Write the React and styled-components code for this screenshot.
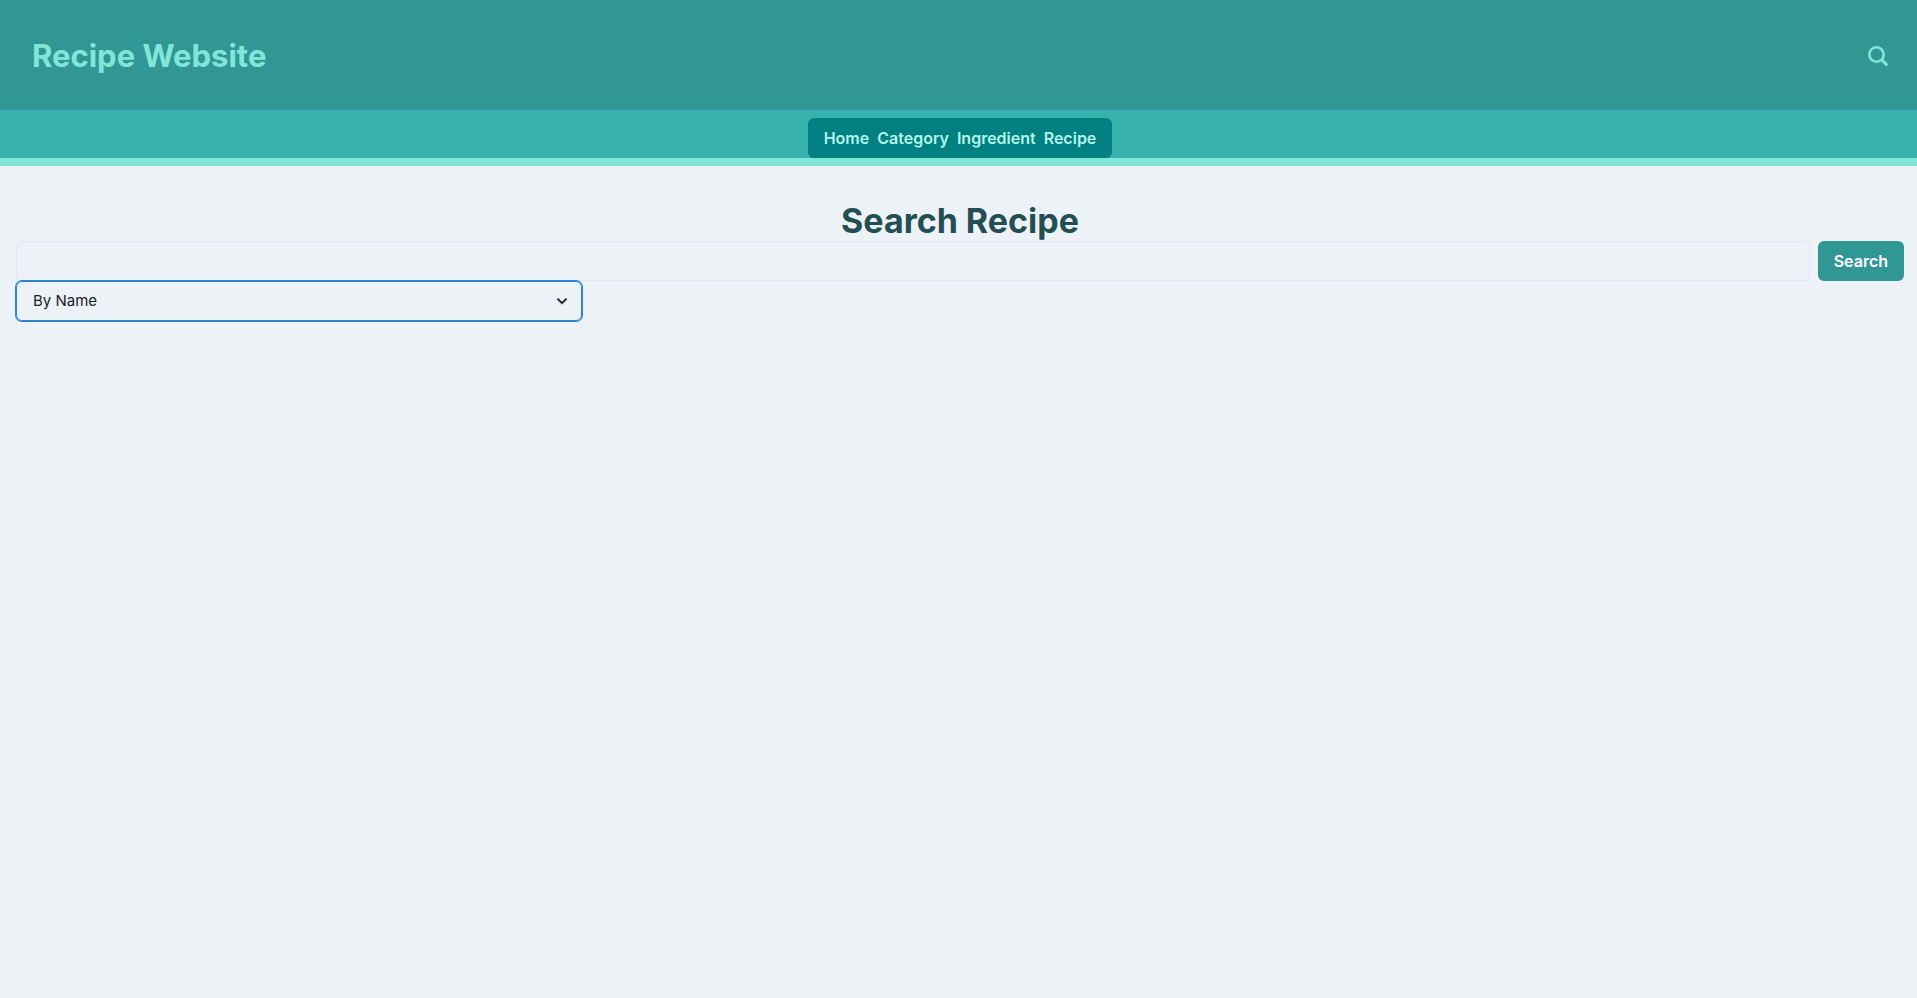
import React from "react";
import styled, { createGlobalStyle } from "styled-components";

const GlobalStyle = createGlobalStyle`
  *, *::before, *::after { box-sizing: border-box; }
  body {
    margin: 0;
    min-height: 100vh;
    background: #edf2f7;
    color: #1a202c;
    font: 400 16px/24px Inter, "Liberation Sans", sans-serif;
  }
  h1, h2 { margin: 0; }
`;

const Header = styled.header`
  display: flex;
  align-items: center;
  justify-content: space-between;
  height: 110px;
  padding: 2px 29px 0 32px;
  background: #319795;
  color: #81e6d9;
`;

const Brand = styled.h1`
  font-size: 31px;
  line-height: 40px;
  font-weight: 700;
`;

const IconButton = styled.button`
  display: flex;
  padding: 0;
  border: 0;
  background: none;
  color: inherit;
  cursor: pointer;
`;

const NavBar = styled.nav`
  display: flex;
  justify-content: center;
  padding: 8px 0 0 3px;
  background: #38b2ac;
  border-bottom: 8px solid #81e6d9;
`;

const NavGroup = styled.div`
  display: flex;
  align-items: center;
  gap: 8px;
  height: 40px;
  padding: 0 16px;
  border-radius: 6px;
  background: #008080;
`;

const NavLink = styled.a`
  color: #b2f5ea;
  font-weight: 600;
  text-decoration: none;
`;

const Main = styled.main`
  padding: 34px 13px 16px 16px;
`;

const Title = styled.h2`
  color: #234e52;
  font-size: 34px;
  line-height: 41px;
  font-weight: 700;
  text-align: center;
`;

const SearchRow = styled.div`
  display: flex;
  gap: 8px;
`;

const SearchInput = styled.input`
  flex: 1;
  min-width: 0;
  height: 40px;
  padding: 0 16px;
  border: 1px solid #e2e8f0;
  border-radius: 6px;
  background: transparent;
  color: inherit;
  font: inherit;
  outline: none;
`;

const SearchButton = styled.button`
  height: 40px;
  padding: 0 16px;
  border: 0;
  border-radius: 6px;
  background: #319795;
  color: #fff;
  font: inherit;
  font-weight: 600;
  cursor: pointer;
`;

const SelectField = styled.div`
  display: grid;
  align-items: center;
  width: 30%;
`;

const Select = styled.select`
  grid-area: 1 / 1;
  width: 100%;
  height: 40px;
  padding: 0 32px 0 16px;
  appearance: none;
  border: 1px solid #3182ce;
  border-radius: 6px;
  box-shadow: 0 0 0 1px #3182ce;
  background: transparent;
  color: inherit;
  font: inherit;
  font-size: 15px;
  outline: none;
`;

const Chevron = styled.svg`
  grid-area: 1 / 1;
  justify-self: end;
  width: 20px;
  height: 20px;
  margin-right: 10px;
  pointer-events: none;
`;

const links = ["Home", "Category", "Ingredient", "Recipe"];

export default function App() {
  return (
    <>
      <GlobalStyle />
      <Header>
        <Brand>Recipe Website</Brand>
        <IconButton type="button" aria-label="Open search">
          <svg width="20" height="20" viewBox="0 0 20 20" fill="none" stroke="currentColor" strokeLinecap="round" aria-hidden="true">
            <circle cx="8.5" cy="8.5" r="7.2" strokeWidth="2.6" />
            <path d="M14.2 14.2L18.3 18.3" strokeWidth="3.2" />
          </svg>
        </IconButton>
      </Header>
      <NavBar>
        <NavGroup>
          {links.map((name) => (
            <NavLink key={name} href={`#${name.toLowerCase()}`}>{name}</NavLink>
          ))}
        </NavGroup>
      </NavBar>
      <Main>
        <Title>Search Recipe</Title>
        <SearchRow>
          <SearchInput type="text" aria-label="Search recipe" />
          <SearchButton type="button">Search</SearchButton>
        </SearchRow>
        <SelectField>
          <Select aria-label="Search by" defaultValue="name">
            <option value="name">By Name</option>
            <option value="category">By Category</option>
            <option value="ingredient">By Ingredient</option>
          </Select>
          <Chevron viewBox="0 0 24 24" fill="currentColor" stroke="currentColor" strokeWidth="0.5" aria-hidden="true">
            <path d="M16.59 8.59L12 13.17 7.41 8.59 6 10l6 6 6-6z" />
          </Chevron>
        </SelectField>
      </Main>
    </>
  );
}
